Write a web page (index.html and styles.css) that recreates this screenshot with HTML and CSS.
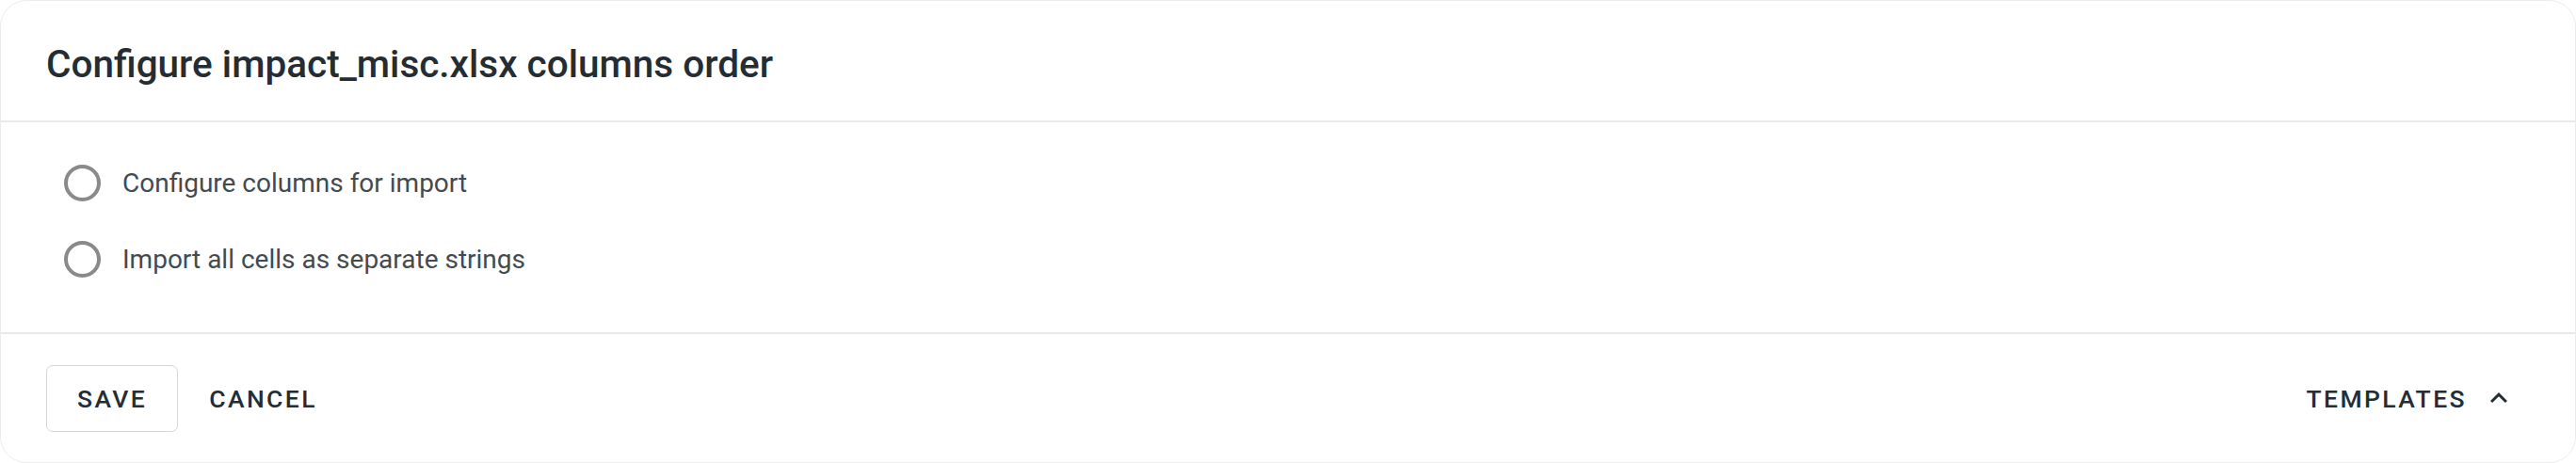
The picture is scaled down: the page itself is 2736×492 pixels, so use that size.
FILE: index.html
```html
<!DOCTYPE html>
<html lang="en">
<head>
    <meta charset="UTF-8">
    <meta name="viewport" content="width=device-width, initial-scale=1.0">
    <title>Configure columns order</title>
    <link rel="stylesheet" href="styles.css">
</head>
<body>
    <main class="dialog">
        <header class="dialog__header">
            <h2 class="dialog__title">Configure impact_misc.xlsx columns order</h2>
        </header>

        <div class="dialog__options">
            <label class="option">
                <input type="radio" name="mode" value="configure"/>
                <span>Configure columns for import</span>
            </label>
            <label class="option">
                <input type="radio" name="mode" value="strings"/>
                <span>Import all cells as separate strings</span>
            </label>
        </div>

        <footer class="dialog__footer">
            <div class="dialog__actions">
                <button class="button button--outlined">Save</button>
                <button class="button">Cancel</button>
            </div>
            <button class="button button--templates">
                Templates
                <svg class="button__icon" viewBox="0 0 24 24" width="36" height="36">
                    <path d="M12 8l-6 6 1.41 1.41L12 10.83l4.59 4.58L18 14z" fill="currentColor"/>
                </svg>
            </button>
        </footer>
    </main>
</body>
</html>
```

FILE: styles.css
```css
body {
    margin: 0;
    background-color: #fff;
    font-family: Roboto, 'Noto Sans', sans-serif;
}

.dialog {
    box-sizing: border-box;
    width: 100%;
    height: 492px;
    border: 1px solid #ececec;
    border-radius: 28px;
    background-color: #fff;
    display: flex;
    flex-direction: column;
}

.dialog__header {
    height: 127px;
    padding-left: 48px;
    display: flex;
    align-items: center;
    border-bottom: 2px solid #e9e9e9;
}

.dialog__title {
    margin: 0;
    padding-top: 6px;
    font-size: 40.5px;
    font-weight: 500;
    color: #232d33;
}

.dialog__options {
    padding: 24px 0 37px 67px;
    border-bottom: 2px solid #e9e9e9;
}

.option {
    height: 81px;
    display: flex;
    align-items: center;
    gap: 23px;
    font-size: 28px;
    color: #434b50;
    cursor: pointer;
}

.option input {
    appearance: none;
    -webkit-appearance: none;
    box-sizing: border-box;
    width: 39px;
    height: 39px;
    margin: 0;
    border: 4px solid #8a8a8a;
    border-radius: 50%;
    cursor: pointer;
}

.dialog__footer {
    flex: 1;
    padding: 0 62px 0 48px;
    display: flex;
    align-items: center;
    justify-content: space-between;
}

.dialog__actions {
    display: flex;
}

.button {
    box-sizing: border-box;
    height: 71px;
    padding: 0 32px;
    border: 1.5px solid transparent;
    border-radius: 7px;
    background: none;
    font-family: Roboto, 'Noto Sans', sans-serif;
    font-size: 26.5px;
    font-weight: 500;
    letter-spacing: 2.4px;
    text-transform: uppercase;
    color: #232d33;
    cursor: pointer;
}

.button--outlined {
    border-color: #d6d6d6;
}

.button--templates {
    padding: 0;
    display: flex;
    align-items: center;
    gap: 16px;
}

.button__icon {
    display: block;
}
```
